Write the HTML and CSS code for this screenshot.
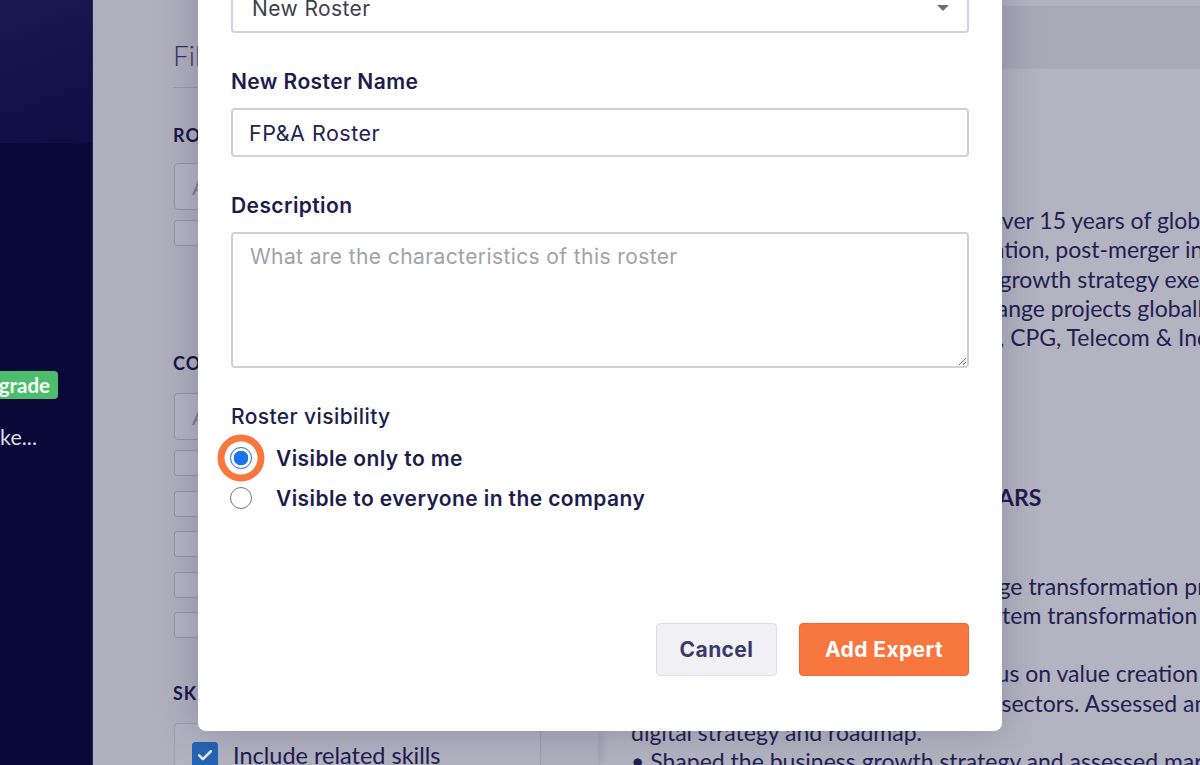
FILE: index.html
```html
<!DOCTYPE html>
<html lang="en">
<head>
<meta charset="utf-8">
<title>Add to Roster</title>
<link rel="stylesheet" href="styles.css">
</head>
<body>
<div class="app">
  <aside class="sidebar">
    <div class="side-top"></div>
    <div class="side-body">
      <div class="side-row"><span class="badge">Upgrade</span></div>
      <div class="side-row side-row-text"><span class="side-text">Make...</span></div>
    </div>
  </aside>

  <section class="filters">
    <h2 class="filters-title">Filters</h2>
    <div class="flabel flabel-first">Role</div>
    <div class="finput">Add a role</div>
    <div class="fcheck-row"><span class="fbox"></span><span class="fcheck-text">Current role only</span></div>

    <div class="flabel flabel-company">Company</div>
    <div class="finput">Add a company</div>
    <div class="fcheck-list">
      <div class="fcheck-row"><span class="fbox"></span><span class="fcheck-text">Current company</span></div>
      <div class="fcheck-row"><span class="fbox"></span><span class="fcheck-text">Past company</span></div>
      <div class="fcheck-row"><span class="fbox"></span><span class="fcheck-text">Competitors</span></div>
      <div class="fcheck-row"><span class="fbox"></span><span class="fcheck-text">Customers</span></div>
      <div class="fcheck-row"><span class="fbox"></span><span class="fcheck-text">Suppliers</span></div>
    </div>

    <div class="flabel flabel-skills">Skills</div>
    <div class="skills-box">
      <span class="fbox fbox-checked">
        <svg viewBox="0 0 24 24" width="20" height="20"><path d="M5 12.5l4.5 4.5L19 7.5" fill="none" stroke="#e9e8f0" stroke-width="3" stroke-linecap="round" stroke-linejoin="round"/></svg>
      </span>
      <span class="skills-text">Include related skills</span>
    </div>
  </section>

  <main class="content">
    <div class="content-head"></div>
    <div class="profile">
      <div class="para para-1">
        <div class="line">Finance transformation leader with over 15 years of global experience</div>
        <div class="line">experience in M&amp;As, capital optimization, post-merger integration</div>
        <div class="line">carve-outs, restructuring &amp; business growth strategy execution.</div>
        <div class="line">Led large-size transformation and change projects globally</div>
        <div class="line">across Financial Services, Healthcare, CPG, Telecom &amp; Industrials.</div>
      </div>
      <h3 class="section-title">Experiences in the last 10+ years</h3>
      <div class="para para-2">
        <div class="line">• Drove multiple global finance change transformation projects,</div>
        <div class="line">including ERP implementations &amp; system transformation</div>
        <div class="line">programmes across Europe.</div>
        <div class="line">• Led due diligence audits with a focus on value creation</div>
        <div class="line">across Consumer, Retail and Pharma sectors. Assessed and defined</div>
        <div class="line">digital strategy and roadmap.</div>
        <div class="line">• Shaped the business growth strategy and assessed market entry options</div>
      </div>
    </div>
  </main>
</div>

<div class="modal">
  <div class="select">
    <span class="select-value">New Roster</span>
    <span class="select-arrow"></span>
  </div>

  <label class="field-label" for="roster-name">New Roster Name</label>
  <input class="text-input" id="roster-name" type="text" value="FP&amp;A Roster">

  <label class="field-label" for="roster-desc">Description</label>
  <textarea class="text-area" id="roster-desc" placeholder="What are the characteristics of this roster"></textarea>

  <div class="visibility-label">Roster visibility</div>
  <div class="radio-list">
    <label class="radio-row">
      <input class="radio radio-focus" type="radio" name="vis" checked>
      <span class="radio-text">Visible only to me</span>
    </label>
    <label class="radio-row">
      <input class="radio" type="radio" name="vis">
      <span class="radio-text">Visible to everyone in the company</span>
    </label>
  </div>

  <div class="actions">
    <button class="btn btn-cancel" type="button">Cancel</button>
    <button class="btn btn-primary" type="button">Add Expert</button>
  </div>
</div>
</body>
</html>
```

FILE: styles.css
```css
* { box-sizing: border-box; }

html, body {
  margin: 0;
  height: 765px;
  overflow: hidden;
}

body {
  font-family: Lato, "Liberation Sans", sans-serif;
  background: #b3b2c0;
  position: relative;
}

.app {
  display: flex;
  height: 765px;
}

/* ---------- sidebar ---------- */
.sidebar {
  width: 93px;
  flex: none;
  background: #0a0838;
  border-right: 1px solid #26245c;
  display: flex;
  flex-direction: column;
}

.side-top {
  height: 143px;
  background: linear-gradient(160deg, #1a1950 0%, #13114a 60%, #0f0d44 100%);
}

.side-body {
  padding-top: 228px;
}

.side-row {
  width: 58px;
  display: flex;
  justify-content: flex-end;
}

.side-row-text {
  width: 37px;
  margin-top: 26px;
}

.badge {
  flex: none;
  display: block;
  height: 28px;
  line-height: 28px;
  padding: 0 8px;
  background: #4dbd6d;
  color: #f4fff6;
  font-weight: 700;
  font-size: 20.5px;
  border-radius: 4px;
  white-space: nowrap;
}

.side-text {
  flex: none;
  color: #dcdbe6;
  font-size: 21.5px;
  line-height: 24px;
  white-space: nowrap;
}

/* ---------- filters panel ---------- */
.filters {
  width: 505px;
  flex: none;
  background: #b0afbe;
  padding: 39px 57px 0 80px;
  box-shadow: 4px 0 8px rgba(40, 38, 80, 0.12);
  position: relative;
  z-index: 1;
}

.filters-title {
  margin: 0;
  font-size: 28px;
  font-weight: 300;
  line-height: 32px;
  color: #353460;
  padding-bottom: 16px;
  border-bottom: 1px solid #9c9bae;
}

.flabel {
  font-size: 18px;
  line-height: 20px;
  font-weight: 700;
  letter-spacing: 1px;
  text-transform: uppercase;
  color: #19174a;
}

.flabel-first { margin-top: 37px; }
.flabel-company { margin-top: 107px; }
.flabel-skills { margin-top: 45px; }

.finput {
  margin-top: 18px;
  height: 47px;
  margin-left: 1px;
  border: 1.5px solid #9594a9;
  border-radius: 4px;
  background: #b5b4c3;
  padding-left: 17px;
  display: flex;
  align-items: center;
  font-size: 22px;
  color: #7e7d93;
}

.flabel-company + .finput { margin-top: 20px; }

.fcheck-row {
  margin-top: 10px;
  margin-left: 1px;
  display: flex;
  align-items: center;
  gap: 14px;
  height: 26px;
}

.fcheck-list {
  display: flex;
  flex-direction: column;
  gap: 14.5px;
  margin-top: 10px;
}

.fcheck-list .fcheck-row { margin-top: 0; }

.fbox {
  width: 26px;
  height: 26px;
  flex: none;
  border: 1.5px solid #9594a9;
  border-radius: 3px;
  background: #b5b4c3;
}

.fcheck-text {
  font-size: 20px;
  color: #221f52;
}

.skills-box {
  margin-top: 20px;
  margin-left: 1px;
  height: 70px;
  border: 1.5px solid #9c9bb0;
  border-bottom: none;
  border-radius: 4px 4px 0 0;
  background: #b3b2c1;
  padding: 18px 17px 0;
  display: flex;
  align-items: flex-start;
  gap: 15px;
}

.fbox-checked {
  background: #2664b4;
  border-color: #2664b4;
  display: flex;
  align-items: center;
  justify-content: center;
}

.skills-text {
  font-size: 23.5px;
  line-height: 26px;
  color: #1e1c4f;
}

/* ---------- main content ---------- */
.content {
  flex: 1;
  min-width: 0;
  overflow: hidden;
  background: #b4b3c1;
  padding-top: 6px;
}

.content-head {
  height: 63px;
  background: #aaa9b8;
}

.profile {
  padding-left: 33px;
  color: #221f52;
  font-size: 23px;
}

.line {
  white-space: nowrap;
  line-height: 29.3px;
}

.para-1 { margin-top: 137px; }

.section-title {
  margin: 133px 0 0;
  font-size: 23px;
  font-weight: 700;
  line-height: 24px;
  text-transform: uppercase;
  white-space: nowrap;
  color: #1e1c4f;
}

.para-2 { margin-top: 62.4px; }
.para-2 .line { line-height: 29.2px; }

/* ---------- modal ---------- */
.modal {
  position: absolute;
  left: 198px;
  top: -40px;
  width: 804px;
  height: 771px;
  background: #ffffff;
  border-radius: 8px;
  box-shadow: 0 0 40px rgba(20, 18, 60, 0.22);
  padding: 24px 33px 55px;
  display: flex;
  flex-direction: column;
  font-family: Inter, "Liberation Sans", sans-serif;
  letter-spacing: 0.4px;
  z-index: 5;
}

.select {
  height: 49px;
  border: 2px solid #d2d2dd;
  border-radius: 4px;
  padding: 0 18px 0 19px;
  display: flex;
  align-items: center;
  justify-content: space-between;
  font-size: 21px;
  color: #3e3e4e;
}

.select-arrow {
  width: 0;
  height: 0;
  border-left: 6px solid transparent;
  border-right: 6px solid transparent;
  border-top: 6px solid #707070;
  margin-top: -2px;
}

.field-label {
  margin-top: 37px;
  font-size: 21px;
  line-height: 24px;
  font-weight: 600;
  color: #1d1c4c;
}

.text-input {
  margin-top: 14px;
  height: 49px;
  border: 2px solid #d0d0dd;
  border-radius: 4px;
  padding: 0 16px;
  font-family: inherit;
  font-size: 21.5px;
  letter-spacing: 0.5px;
  color: #24234f;
  outline: none;
}

.text-area {
  margin-top: 14px;
  height: 136px;
  border: 2px solid #d0d0dd;
  border-radius: 4px;
  padding: 12px 17px;
  font-family: inherit;
  font-size: 21px;
  letter-spacing: 0.4px;
  line-height: 22px;
  color: #24234f;
  resize: vertical;
  outline: none;
}

.text-area::placeholder {
  color: #a1a1ab;
}

.visibility-label {
  margin-top: 37px;
  font-size: 21px;
  line-height: 24px;
  font-weight: 500;
  color: #1d1c4c;
}

.radio-list {
  margin-top: 9px;
  display: flex;
  flex-direction: column;
}

.radio-row {
  height: 40px;
  display: flex;
  align-items: center;
  gap: 24px;
}

.radio {
  appearance: none;
  -webkit-appearance: none;
  width: 22px;
  height: 22px;
  margin: 0 0 0 -1px;
  flex: none;
  border: 1.5px solid #767676;
  border-radius: 50%;
  background: #ffffff;
}

.radio:checked {
  border-color: #1b73f0;
  background: radial-gradient(circle, #1b73f0 0 7px, #ffffff 7.6px);
}

.radio-focus {
  box-shadow: 0 0 0 5.5px #ffffff, 0 0 0 12.5px #f9773f;
}

.radio-text {
  font-size: 21px;
  font-weight: 600;
  color: #1d1c4c;
}

.actions {
  margin-top: auto;
  display: flex;
  justify-content: flex-end;
  gap: 22px;
}

.btn {
  height: 53px;
  border-radius: 4px;
  font-family: inherit;
  font-size: 21px;
  letter-spacing: 0.4px;
  font-weight: 700;
  cursor: pointer;
}

.btn-cancel {
  width: 121px;
  background: #f2f2f6;
  border: 1px solid #dedde7;
  color: #3b3a6b;
}

.btn-primary {
  width: 170px;
  background: #f8773e;
  border: 1px solid #f2692d;
  color: #ffffff;
}
```
